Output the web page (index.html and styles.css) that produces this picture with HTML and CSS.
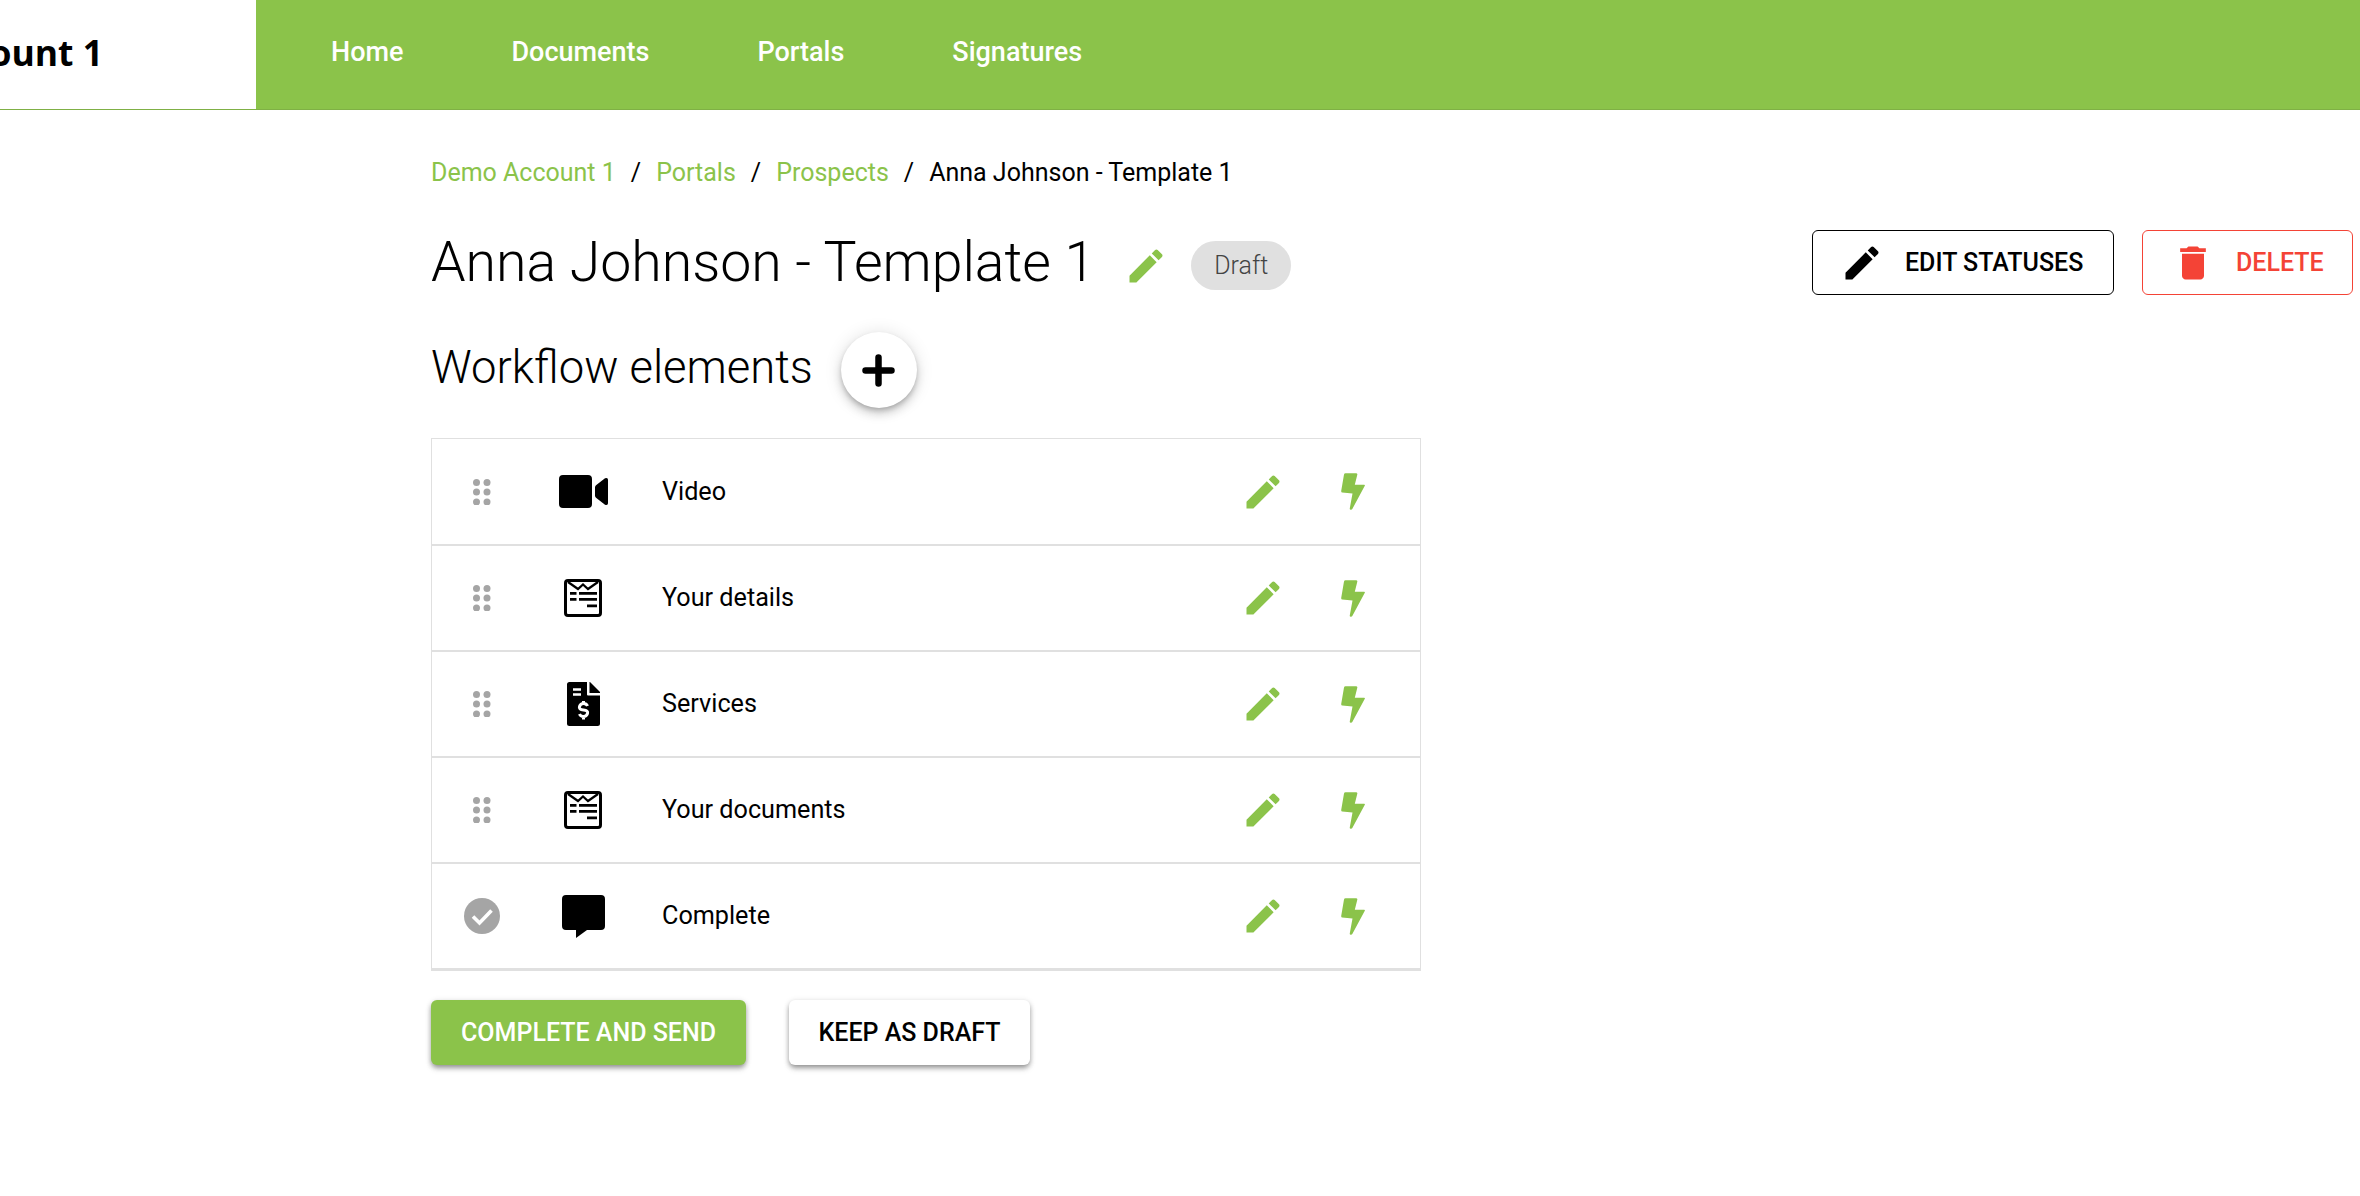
FILE: index.html
```html
<!DOCTYPE html>
<html lang="en">
<head>
<meta charset="utf-8">
<title>Anna Johnson - Template 1</title>
<link rel="stylesheet" href="styles.css">
</head>
<body>
<svg class="defs" width="0" height="0" aria-hidden="true">
  <symbol id="i-edit" viewBox="0 0 24 24"><path d="M3 17.25V21h3.75L17.81 9.94l-3.75-3.75L3 17.25zM20.71 7.04c.39-.39.39-1.02 0-1.41l-2.34-2.34c-.39-.39-1.02-.39-1.41 0l-1.83 1.83 3.75 3.75 1.83-1.83z"/></symbol>
  <symbol id="i-bolt" viewBox="0 0 24 37"><path d="M3 1.5Q3.3.3 4.5.3H15q1.6 0 1.3 1.4L13.8 11.8H23.2q1 0 .6 1L11.3 36q-.9 1.2-2.2.4-.5-.4-.3-1.1L11.5 20.6 1.2 19.6Q.1 19.3.2 18z"/></symbol>
  <symbol id="i-drag" viewBox="0 0 18 26"><circle cx="3.5" cy="3.5" r="3.5"/><circle cx="14" cy="3.5" r="3.5"/><circle cx="3.5" cy="13" r="3.5"/><circle cx="14" cy="13" r="3.5"/><circle cx="3.5" cy="23" r="3.5"/><circle cx="14" cy="23" r="3.5"/></symbol>
  <symbol id="i-form" viewBox="0 0 38 38"><rect x="1.5" y="1.5" width="35" height="35" rx="2.5" fill="none" stroke="#000" stroke-width="3"/><path d="M4 3l10 7 5-4.500 5 4.500 10-7" fill="none" stroke="#000" stroke-width="2.200"/><path d="M6 13h6.500v2.800H6zM15 13h18v2.800H15zM6 19h6.500v2.800H6zM15 19h18v2.800H15zM23 25.500h10v2.800H23z"/></symbol>
</svg>

<header class="topbar">
  <div class="brand"><span class="brand-name">Demo Account 1</span></div>
  <nav class="mainnav">
    <a class="nav-link">Home</a>
    <a class="nav-link">Documents</a>
    <a class="nav-link">Portals</a>
    <a class="nav-link">Signatures</a>
  </nav>
</header>

<main class="page">
  <div class="crumbs">
    <a class="crumb">Demo Account 1</a><span class="sep">/</span>
    <a class="crumb">Portals</a><span class="sep">/</span>
    <a class="crumb">Prospects</a><span class="sep">/</span>
    <span>Anna Johnson - Template 1</span>
  </div>

  <div class="title-row">
    <h1 class="title">Anna Johnson - Template 1</h1>
    <svg class="title-edit green"><use href="#i-edit"/></svg>
    <span class="chip">Draft</span>
    <div class="actions">
      <button class="btn-outline btn-edit"><svg class="btn-icon"><use href="#i-edit"/></svg>EDIT STATUSES</button>
      <button class="btn-outline btn-delete"><svg class="btn-icon" viewBox="0 0 24 24"><path d="M6 19c0 1.100.9 2 2 2h8c1.100 0 2-.9 2-2V7H6v12zM19 4h-3.500l-1-1h-5l-1 1H5v2h14V4z"/></svg>DELETE</button>
    </div>
  </div>

  <div class="section-row">
    <h2 class="section-title">Workflow elements</h2>
    <button class="fab" aria-label="Add"><svg class="fab-plus" viewBox="0 0 33 33"><path d="M16.500 3.500v26M3.500 16.500h26" fill="none" stroke="#000" stroke-width="6.500" stroke-linecap="round"/></svg></button>
  </div>

  <div class="list">
    <div class="row">
      <svg class="drag"><use href="#i-drag"/></svg>
      <svg class="type-icon" viewBox="0 0 49 33"><path d="M4 0h25q4 0 4 4v25q0 4-4 4H4q-4 0-4-4V4q0-4 4-4zM36 12.500q0-1.500 1-2.300L46 3.300q3-1 3 1.500v23.500q0 2.500-3 1.500l-9-7q-1-.8-1-2.300z"/></svg>
      <span class="label">Video</span>
      <svg class="act-edit green"><use href="#i-edit"/></svg>
      <svg class="act-bolt green"><use href="#i-bolt"/></svg>
    </div>
    <div class="row">
      <svg class="drag"><use href="#i-drag"/></svg>
      <svg class="type-icon form"><use href="#i-form"/></svg>
      <span class="label">Your details</span>
      <svg class="act-edit green"><use href="#i-edit"/></svg>
      <svg class="act-bolt green"><use href="#i-bolt"/></svg>
    </div>
    <div class="row">
      <svg class="drag"><use href="#i-drag"/></svg>
      <svg class="type-icon doc" viewBox="0 0 33 44"><path d="M2.500 0H20v12.500q0 1 1 1H33V41.500q0 2.500-2.500 2.500h-28Q0 44 0 41.500V2.500Q0 0 2.500 0z"/><path d="M22.500 0h.5L33 10v1H22.500z"/><path d="M6 7.500h8M6 12.500h8" stroke="#fff" stroke-width="2.400" fill="none"/><path d="M20.500 24q-1-2.500-4-2.500T12.500 24.500t4 3.500 4 3.500-4 3-4-2.500M16.500 19v2.500M16.500 35v2.500" stroke="#fff" stroke-width="3" fill="none"/></svg>
      <span class="label">Services</span>
      <svg class="act-edit green"><use href="#i-edit"/></svg>
      <svg class="act-bolt green"><use href="#i-bolt"/></svg>
    </div>
    <div class="row">
      <svg class="drag"><use href="#i-drag"/></svg>
      <svg class="type-icon form"><use href="#i-form"/></svg>
      <span class="label">Your documents</span>
      <svg class="act-edit green"><use href="#i-edit"/></svg>
      <svg class="act-bolt green"><use href="#i-bolt"/></svg>
    </div>
    <div class="row">
      <svg class="check" viewBox="0 0 36 36"><circle cx="18" cy="18" r="18" fill="#a5a5a5"/><path d="M9 18.500l6.500 6.500L27.500 12.500" fill="none" stroke="#fff" stroke-width="3.600"/></svg>
      <svg class="type-icon chat" viewBox="0 0 43 43"><path d="M4 0h35q4 0 4 4v27q0 4-4 4H25L14 43V35H4q-4 0-4-4V4q0-4 4-4z"/></svg>
      <span class="label">Complete</span>
      <svg class="act-edit green"><use href="#i-edit"/></svg>
      <svg class="act-bolt green"><use href="#i-bolt"/></svg>
    </div>
  </div>

  <div class="footer-actions">
    <button class="btn-raised btn-primary">COMPLETE AND SEND</button>
    <button class="btn-raised btn-plain">KEEP AS DRAFT</button>
  </div>
</main>
</body>
</html>
```
FILE: styles.css
```css
* { box-sizing: border-box; }
html, body { margin: 0; padding: 0; background: #fff; overflow: hidden; }
body { font-family: Roboto, "Liberation Sans", sans-serif; color: #000; height: 1196px; }
.defs { position: absolute; }
.green { fill: #8bc34a; }

.topbar { display: flex; height: 110px; background: #8bc34a; border-bottom: 1px solid #7fb045; }
.brand { width: 256px; background: #fff; display: flex; justify-content: flex-end; align-items: center; overflow: hidden; padding: 0 153px 6px 0; flex: none; }
.brand-name { font-family: "Open Sans", sans-serif; font-weight: 700; font-size: 35.500px; white-space: nowrap; }
.mainnav { display: flex; align-items: flex-start; gap: 108px; padding: 34px 0 0 75px; }
.nav-link { color: #fff; font-size: 27px; font-weight: 500; line-height: 36px; }

.page { padding: 0 7px 0 431px; }
.crumbs { display: flex; font-size: 25px; line-height: 36px; padding-top: 45px; font-weight: 400; }
.crumb { color: #8bc34a; }
.sep { margin: 0 15px; }

.title-row { display: flex; align-items: center; height: 66px; margin-top: 39px; }
.title { margin: 0; font-size: 55.400px; font-weight: 300; line-height: 66px; white-space: nowrap; }
.title-edit { width: 44px; height: 44px; margin: 6px 0 0 29px; }
.chip { width: 100px; height: 49px; margin: 5px 0 0 23px; border-radius: 25px; background: #e0e0e0; color: #444; font-size: 25px; font-weight: 300; display: flex; align-items: center; justify-content: center; }
.actions { margin-left: auto; display: flex; gap: 28px; align-self: flex-start; }
.btn-outline { display: flex; align-items: center; height: 65px; background: #fff; border: 1px solid #000; border-radius: 6px; font: 500 25px Roboto, sans-serif; padding: 0; }
.btn-edit { width: 302px; padding-left: 27px; gap: 21px; color: #000; }
.btn-delete { width: 211px; padding-left: 28px; gap: 21px; color: #f44336; border-color: #f44336; }
.btn-icon { width: 44px; height: 44px; fill: currentColor; flex: none; }

.section-row { display: flex; align-items: center; height: 76px; margin-top: 36px; }
.section-title { margin: 0; font-size: 45.400px; font-weight: 300; line-height: 60px; margin-top: -5px; white-space: nowrap; }
.fab { width: 76px; height: 76px; margin-left: 28px; border: 0; border-radius: 50%; background: #fff; padding: 0; display: flex; align-items: center; justify-content: center; box-shadow: 0 3px 5px -1px rgba(0,0,0,.2), 0 6px 10px 0 rgba(0,0,0,.14), 0 1px 18px 0 rgba(0,0,0,.12); }
.fab-plus { width: 33px; height: 33px; }

.list { width: 990px; margin-top: 30px; border: 1px solid #e0e0e0; border-bottom: 0; }
.row { display: grid; grid-template-columns: 100px 102px 1fr 91px 91px; align-items: center; justify-items: center; height: 106px; border-bottom: 2px solid #e0e0e0; padding-right: 22px; }
.row:first-child { height: 107px; }
.row:last-child { border-bottom-width: 3px; height: 107px; }
.drag { width: 18px; height: 26px; fill: #a5a5a5; }
.check { width: 36px; height: 36px; }
.type-icon { width: 49px; height: 33px; }
.form { width: 38px; height: 38px; }
.doc { width: 33px; height: 44px; }
.chat { width: 43px; height: 43px; }
.label { justify-self: start; padding-left: 28px; font-size: 25.200px; line-height: 32px; }
.act-edit { width: 44px; height: 44px; position: relative; left: 1px; }
.act-bolt { width: 24px; height: 37px; }

.footer-actions { display: flex; gap: 43px; margin-top: 29px; }
.btn-raised { height: 65px; border: 0; border-radius: 6px; font: 500 25px Roboto, sans-serif; padding: 0; box-shadow: 0 3px 5px -1px rgba(0,0,0,.3), 0 4px 6px 0 rgba(0,0,0,.14), 0 1px 6px 0 rgba(0,0,0,.12); }
.btn-primary { width: 315px; background: #8bc34a; color: #fff; }
.btn-plain { width: 241px; background: #fff; color: #000; }
```
